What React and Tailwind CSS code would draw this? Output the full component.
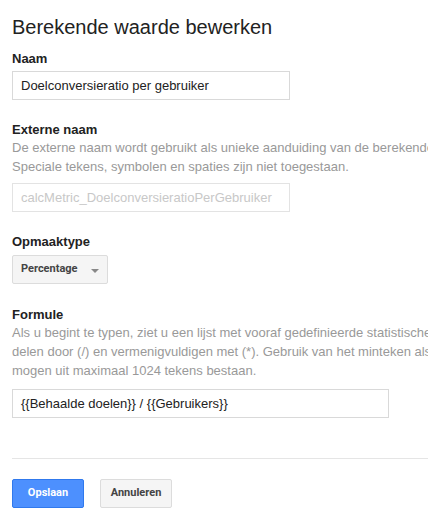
import React from "react";

const arial = { fontFamily: '"Liberation Sans", Arial, sans-serif' };

function Label({ children, className = "" }) {
  return (
    <div className={`text-[13px] leading-[16px] font-bold text-[#222] ${className}`}>{children}</div>
  );
}

function Desc({ lines }) {
  return (
    <div className="text-[13px] leading-[19px] text-[#999] whitespace-nowrap">
      {lines.map((l, i) => (
        <div key={i}>{l}</div>
      ))}
    </div>
  );
}

export default function App() {
  return (
    <div
      className="w-[428px] h-[519px] overflow-hidden bg-white text-[#222]"
      style={arial}
    >
      <div className="pl-[12px] pt-[15px]">
        <h1 className="text-[20px] leading-[24px] font-normal text-[#222]">Berekende waarde bewerken</h1>

        <Label className="mt-[12px]">Naam</Label>
        <div className="mt-[4px] w-[278px] h-[29px] border border-[#d9d9d9] px-[8px] flex items-center text-[13px] text-[#222]">
          Doelconversieratio per gebruiker
        </div>

        <Label className="mt-[22px]">Externe naam</Label>
        <Desc
          lines={[
            "De externe naam wordt gebruikt als unieke aanduiding van de berekende waarde.",
            "Speciale tekens, symbolen en spaties zijn niet toegestaan.",
          ]}
        />
        <div className="mt-[7px] w-[278px] h-[29px] border border-[#e3e3e3] px-[8px] flex items-center text-[13px] text-[#c8c8c8]">
          calcMetric_DoelconversieratioPerGebruiker
        </div>

        <Label className="mt-[22px]">Opmaaktype</Label>
        <div
          className="mt-[5px] w-[96px] h-[29px] rounded-[2px] border border-[#dcdcdc] bg-[#f5f5f5] flex items-center pl-[8px] pr-[8px] text-[11px] font-bold text-[#444]"
          style={{ fontFamily: 'Roboto, "Liberation Sans", Arial, sans-serif' }}
        >
          <span className="flex-1">Percentage</span>
          <svg width="8" height="4" viewBox="0 0 8 4" className="mt-[2px]">
            <path d="M0 0 L8 0 L4 4 Z" fill="#888" />
          </svg>
        </div>

        <Label className="mt-[23px]">Formule</Label>
        <Desc
          lines={[
            "Als u begint te typen, ziet u een lijst met vooraf gedefinieerde statistische gegevens.",
            "delen door (/) en vermenigvuldigen met (*). Gebruik van het minteken als",
            "mogen uit maximaal 1024 tekens bestaan.",
          ]}
        />
        <div className="mt-[9px] w-[377px] h-[29px] border border-[#d9d9d9] px-[8px] flex items-center text-[13px] text-[#222]">
          {"{{Behaalde doelen}} / {{Gebruikers}}"}
        </div>

        <div className="mt-[40px] h-px bg-[#e5e5e5]" />

        <div
          className="mt-[20px] flex gap-[16px] text-[11px] font-bold"
          style={{ fontFamily: 'Roboto, "Liberation Sans", Arial, sans-serif' }}
        >
          <div className="w-[72px] h-[29px] rounded-[2px] border border-[#3079ed] bg-[#4d90fe] text-white flex items-center justify-center">
            Opslaan
          </div>
          <div className="w-[72px] h-[29px] rounded-[2px] border border-[#dcdcdc] bg-[#f5f5f5] text-[#444] flex items-center justify-center">
            Annuleren
          </div>
        </div>
      </div>
    </div>
  );
}
